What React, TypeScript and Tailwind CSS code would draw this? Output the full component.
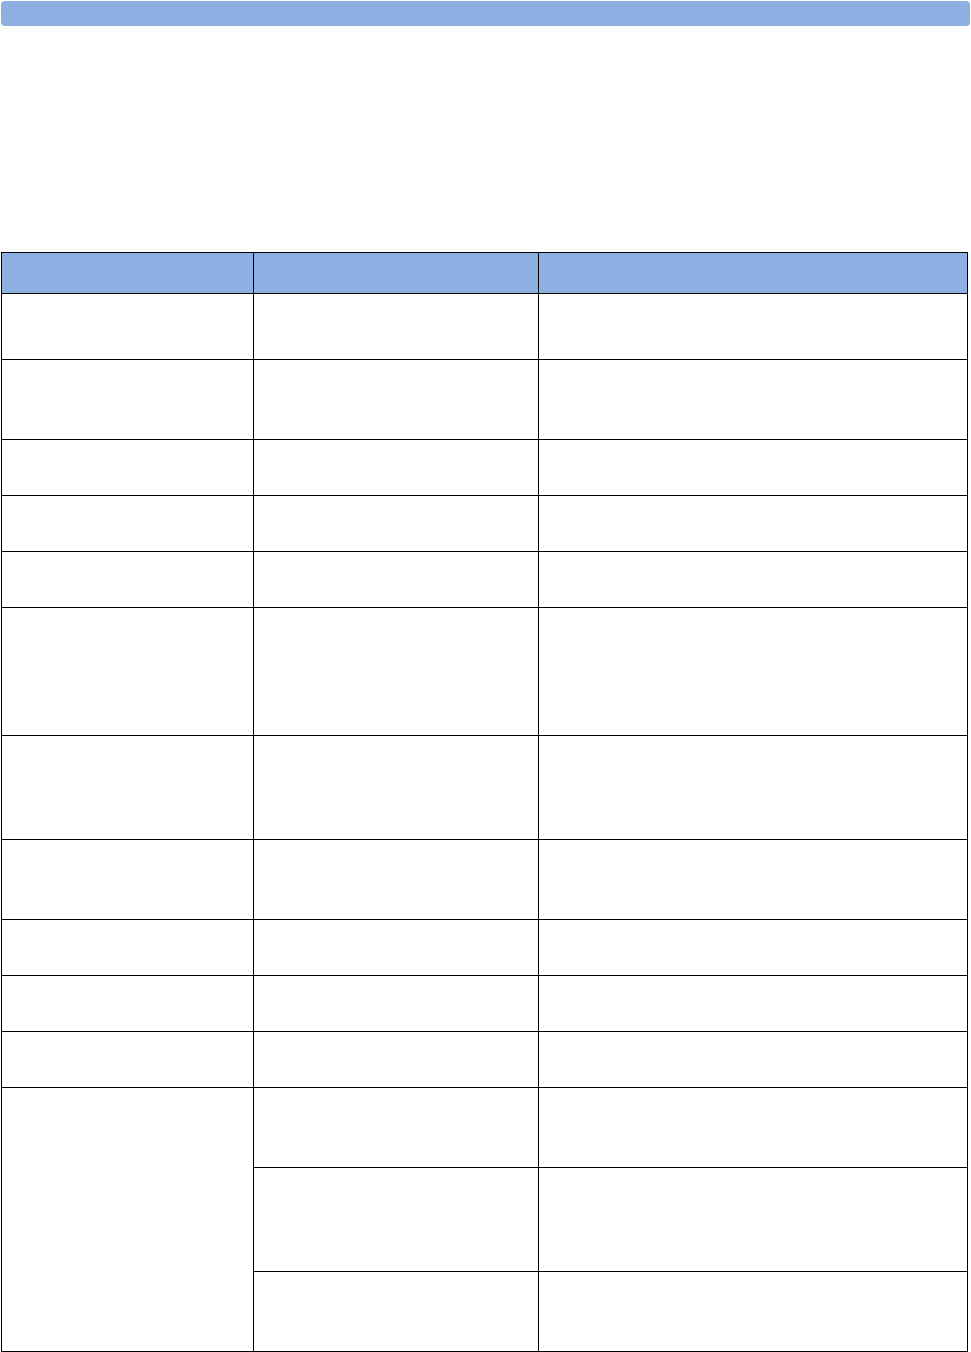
const rows = [66, 80, 56, 56, 56, 128, 104, 80, 56, 56, 56];
const lastGroup = [80, 104, 80];

export default function App() {
  return (
    <div className="min-h-[1352px] bg-white px-px pt-px font-['Liberation_Sans',Arial,sans-serif]">
      <div className="h-[25px] w-[969px] rounded-[4px] bg-[#8db0e2]" />
      <table className="mt-[226px] w-[966px] table-fixed border-collapse">
        <colgroup>
          <col className="w-[252px]" />
          <col className="w-[285px]" />
          <col className="w-[429px]" />
        </colgroup>
        <thead>
          <tr className="h-[41px] bg-[#8db0e2]">
            <th className="border border-black" />
            <th className="border border-black" />
            <th className="border border-black" />
          </tr>
        </thead>
        <tbody>
          {rows.map((h, i) => (
            <tr key={i} style={{ height: h }}>
              <td className="border border-black" />
              <td className="border border-black" />
              <td className="border border-black" />
            </tr>
          ))}
          {lastGroup.map((h, i) => (
            <tr key={"g" + i} style={{ height: h }}>
              {i === 0 && <td rowSpan={3} className="border border-black" />}
              <td className="border border-black" />
              <td className="border border-black" />
            </tr>
          ))}
        </tbody>
      </table>
    </div>
  );
}
